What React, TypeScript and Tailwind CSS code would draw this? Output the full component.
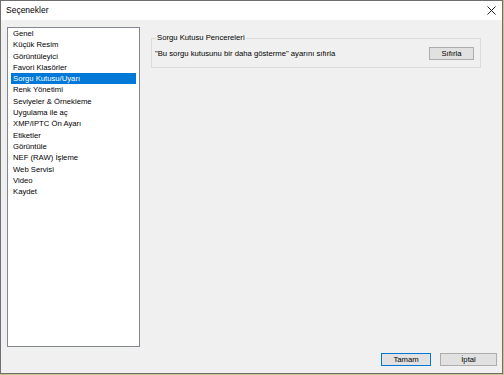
const items = [
  "Genel",
  "Küçük Resim",
  "Görüntüleyici",
  "Favori Klasörler",
  "Sorgu Kutusu/Uyarı",
  "Renk Yönetimi",
  "Seviyeler & Örnekleme",
  "Uygulama ile aç",
  "XMP/IPTC Ön Ayarı",
  "Etiketler",
  "Görüntüle",
  "NEF (RAW) İşleme",
  "Web Servisi",
  "Video",
  "Kaydet",
];

const font = { fontFamily: '"Liberation Sans", Arial, sans-serif' };

export default function App() {
  const active = "Sorgu Kutusu/Uyarı";

  return (
    <div
      className="w-[504px] h-[375px] bg-[#cdbf8a] text-[7.7px] text-black antialiased"
      style={font}
    >
      <div className="flex h-[374px] w-[503px] flex-col border border-[#6f6f6f] bg-[#f0f0f0]">
        {/* Title bar */}
        <div className="flex h-[19px] items-center justify-between bg-white pl-[5px] pr-[5px]">
          <span className="text-[8.5px]">Seçenekler</span>
          <svg width="9" height="9" viewBox="0 0 9 9" className="mr-[1px]">
            <path d="M0.5 0.5 L8.5 8.5 M8.5 0.5 L0.5 8.5" stroke="#222" strokeWidth="1" />
          </svg>
        </div>

        {/* Body */}
        <div className="flex flex-1 flex-col px-[6px] pt-[7px]">
          <div className="flex h-[320px] gap-[11px]">
            {/* Category list */}
            <div className="w-[133px] border border-[#828790] bg-white px-[3px]">
              {items.map((it) => (
                <div
                  key={it}
                  className={
                    it === active
                      ? "h-[11.3px] bg-[#0078d7] pl-[2px] leading-[11.3px] text-white"
                      : "h-[11.3px] pl-[2px] leading-[11.3px]"
                  }
                >
                  {it}
                </div>
              ))}
            </div>

            {/* Settings panel */}
            <div className="flex-1 pt-[11px] pr-[15px]">
              <div className="relative h-[30px] border border-[#dcdcdc]">
                <span className="absolute -top-[6px] left-[4px] bg-[#f0f0f0] px-[1px] leading-[10px]">
                  Sorgu Kutusu Pencereleri
                </span>
                <div className="flex items-center justify-between pl-[3px] pr-[6px] pt-[8px]">
                  <span>"Bu sorgu kutusunu bir daha gösterme" ayarını sıfırla</span>
                  <button className="h-[13px] w-[45px] border border-[#adadad] bg-[#e1e1e1] leading-[11px]">
                    Sıfırla
                  </button>
                </div>
              </div>
            </div>
          </div>

          {/* Footer buttons */}
          <div className="mt-[6px] flex justify-end gap-[9px] -mr-[1px]">
            <button className="h-[13px] w-[50px] border border-[#0078d7] bg-[#e1e1e1] leading-[11px]">
              Tamam
            </button>
            <button className="h-[13px] w-[57px] border border-[#adadad] bg-[#e1e1e1] leading-[11px]">
              İptal
            </button>
          </div>
        </div>
      </div>
    </div>
  );
}
